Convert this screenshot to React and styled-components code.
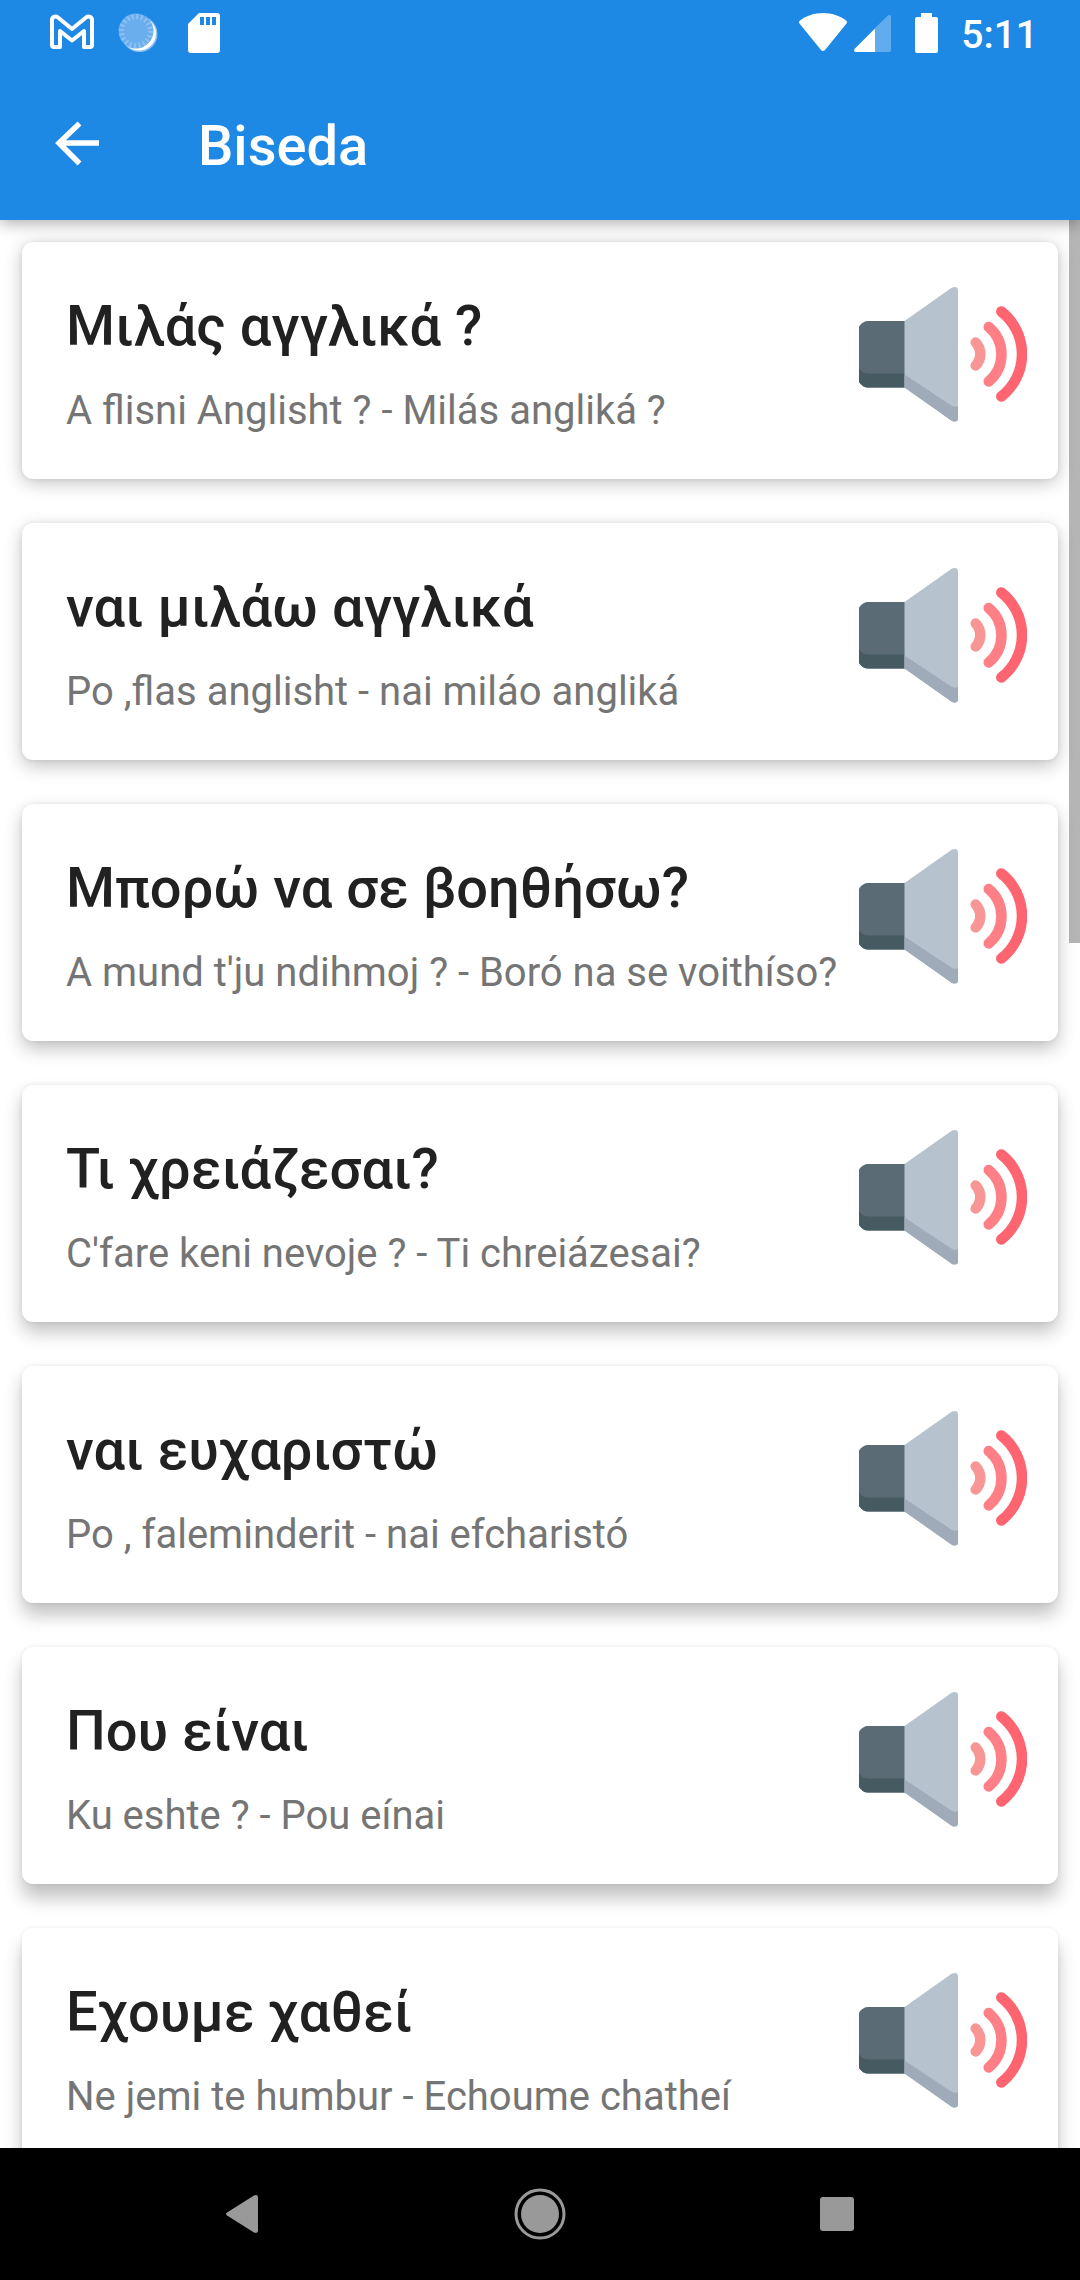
import React from "react";
import styled, { createGlobalStyle } from "styled-components";

const GlobalStyle = createGlobalStyle`
  *, *::before, *::after {
    box-sizing: border-box;
  }

  body {
    margin: 0;
    background-color: #fff;
    font-family: Roboto, "Noto Sans", sans-serif;
  }
`;

const Screen = styled.div`
  overflow: hidden;

  display: flex;
  flex-direction: column;

  width: 100%;
  height: 100vh;
`;

const Header = styled.header`
  position: relative;
  z-index: 2;

  flex: none;
  background-color: #1e88e5;
  color: #fff;

  box-shadow: 0 4px 14px rgba(0, 0, 0, 0.3);
`;

const StatusBar = styled.div`
  display: flex;
  justify-content: space-between;

  height: 66px;
  padding: 0 42px 0 50px;
`;

const StatusGroup = styled.div`
  display: flex;
  align-items: center;
  gap: ${({ $gap }) => $gap}px;
`;

const StatusIcon = styled.svg`
  display: block;
  flex: none;
  width: ${({ $width }) => $width || 44}px;
  height: 66px;
`;

const Time = styled.time`
  padding: 4px 0 0 14px;

  font-size: 39px;
  font-weight: 500;
  line-height: 46px;
`;

const Toolbar = styled.div`
  display: flex;
  align-items: center;
  gap: 88px;

  height: 154px;
  padding: 0 44px;
`;

const IconButton = styled.button`
  cursor: pointer;

  flex: none;
  padding: 0;
  background: none;
  border: none;

  & svg {
    display: block;
  }
`;

const PageTitle = styled.h1`
  margin: 0;
  padding-top: 6px;

  font-size: 56px;
  font-weight: 500;
  line-height: 64px;
`;

const Content = styled.main`
  position: relative;
  overflow: hidden;

  flex: 1;
  min-height: 0;
`;

const List = styled.ul`
  overflow-y: auto;
  scrollbar-width: none;

  display: flex;
  flex-direction: column;
  gap: 44px;

  height: 100%;
  margin: 0;
  padding: 22px;
  list-style: none;
`;

const Card = styled.li`
  display: flex;
  align-items: flex-start;
  flex: none;

  padding-right: 31px;
  background-color: #fff;

  border-radius: 11px;
  box-shadow:
    0 0 4px rgba(0, 0, 0, 0.08),
    0 ${({ $drop }) => $drop}px 18px rgba(0, 0, 0, 0.24);
`;

const Phrase = styled.div`
  flex: 1;
  display: flex;
  flex-direction: column;
  gap: 30px;

  min-width: 0;
  padding: 52px 0 45px 44px;
  white-space: nowrap;
`;

const Greek = styled.h2`
  margin: 0;

  font-size: 56px;
  font-weight: 500;
  line-height: 64px;
  color: #212121;
`;

const Translation = styled.p`
  margin: 0;

  font-size: 40px;
  line-height: 46px;
  color: #757575;
`;

const SpeakButton = styled(IconButton)`
  margin-top: 28px;
`;

const ScrollThumb = styled.div`
  position: absolute;
  top: 0;
  right: 0;

  width: 11px;
  height: calc(100% * 3 / 8);
  background-color: rgba(0, 0, 0, 0.29);
`;

const NavBar = styled.nav`
  flex: none;
  display: flex;
  justify-content: center;
  align-items: center;

  height: 132px;
  background-color: #000;
`;

const NavButton = styled(IconButton)`
  display: flex;
  justify-content: center;
  width: 297px;
`;

const phrases = [
  { greek: "Μιλάς αγγλικά ?", text: "A flisni Anglisht ? - Milás angliká ?" },
  { greek: "ναι μιλάω αγγλικά", text: "Po ,flas anglisht - nai miláo angliká" },
  {
    greek: "Μπορώ να σε βοηθήσω?",
    text: "A mund t'ju ndihmoj ? - Boró na se voithíso?",
  },
  { greek: "Τι χρειάζεσαι?", text: "C'fare keni nevoje ? - Ti chreiázesai?" },
  { greek: "ναι ευχαριστώ", text: "Po , faleminderit - nai efcharistó" },
  { greek: "Που είναι", text: "Ku eshte ? - Pou eínai" },
  { greek: "Εχουμε χαθεί", text: "Ne jemi te humbur - Echoume chatheí" },
];

function GmailIcon() {
  return (
    <StatusIcon viewBox="0 0 44 66" aria-hidden="true">
      <path
        d="M2 20v25q0 2 2 2h6V31l12 9.500L34 31v16h6q2 0 2-2V20c0-3-3.500-4.500-6-2.500L22 29 8 17.500C5.500 15.500 2 17 2 20z"
        fill="none"
        stroke="#fff"
        strokeWidth="4"
        strokeLinejoin="round"
      />
    </StatusIcon>
  );
}

function SyncIcon() {
  return (
    <StatusIcon viewBox="0 0 44 66" aria-hidden="true">
      <circle cx="23.500" cy="34" r="18" fill="#8fc3f2" />
      <circle cx="23" cy="33.500" r="17" fill="#fff" />
      <circle cx="20" cy="31" r="17.500" fill="#6aaeed" />
      <circle
        cx="20"
        cy="31"
        r="14.500"
        fill="none"
        stroke="#8fc3f2"
        strokeWidth="5"
        strokeDasharray="1.800 2.750"
      />
    </StatusIcon>
  );
}

function SdCardIcon() {
  return (
    <StatusIcon viewBox="0 0 44 66" aria-hidden="true">
      <path
        d="M17 13h18q3 0 3 3v34q0 3-3 3H9q-3 0-3-3V24z"
        fill="#fff"
      />
      <path d="M18 17h4v8h-4zM24 17h4v8h-4zM30 17h4v8h-4z" fill="#1e88e5" />
    </StatusIcon>
  );
}

function WifiIcon() {
  return (
    <StatusIcon $width={48} viewBox="0 0 48 66" aria-hidden="true">
      <path
        d="M24 13c-8.500 0-16.500 2.700-23 7.500-1.200 1-1.200 2-.5 3L22 50q2 2 4 0l21.500-26.500c.7-1 .7-2-.5-3C40.500 15.700 32.500 13 24 13z"
        fill="#fff"
      />
    </StatusIcon>
  );
}

function SignalIcon() {
  return (
    <StatusIcon viewBox="0 0 44 66" aria-hidden="true">
      <path
        d="M24 28 37 15.500q3-1.500 3 1.500v33q0 2-2 2H24z"
        fill="#fff"
        fillOpacity="0.3"
      />
      <path d="M24 28.500V52H5q-3-.5-1.500-3z" fill="#fff" />
    </StatusIcon>
  );
}

function BatteryIcon() {
  return (
    <StatusIcon viewBox="0 0 44 66" aria-hidden="true">
      <path
        d="M22 13h11v4h4q2 0 2 2v32q0 2-2 2H18q-2 0-2-2V19q0-2 2-2h4z"
        fill="#fff"
      />
    </StatusIcon>
  );
}

function BackArrowIcon() {
  return (
    <svg width="66" height="66" viewBox="0 0 66 66" aria-hidden="true">
      <path
        d="M35.500 13.500 15 33l20.500 20.500M14.500 33H55"
        fill="none"
        stroke="#fff"
        strokeWidth="5.500"
      />
    </svg>
  );
}

function SpeakerIcon() {
  return (
    <svg width="168" height="168" viewBox="0 0 168 168" aria-hidden="true">
      <path d="M0 56.500Q4 51 9 51h37v66.500H9q-5 0-9-5.500z" fill="#5a6b75" />
      <path d="M0 98q3 5.500 9 5.500h37v14H9q-5 0-9-5.500z" fill="#465a61" />
      <path
        d="M45.500 51 93 17.500q6-2 6 3V148q0 5-6 3L45.500 117.500z"
        fill="#b6c3ce"
      />
      <path
        d="M45.500 104.500 93 136q3 1.500 6 0v12q0 5-6 3L45.500 117.500z"
        fill="#9fabb9"
      />
      <g fill="none" strokeLinecap="round" strokeWidth="10.500">
        <path d="M116.700 72.500a16.700 16.700 0 0 1 0 23" stroke="#f89696" />
        <path d="M129.700 57a35.500 35.500 0 0 1 0 54.500" stroke="#ff7f87" />
        <path d="M142.300 41.500a54 54 0 0 1 0 85" stroke="#ff6471" />
      </g>
    </svg>
  );
}

function PhraseCard({ phrase, index }) {
  return (
    <Card $drop={4 + index * 2}>
      <Phrase>
        <Greek lang="el">{phrase.greek}</Greek>
        <Translation>{phrase.text}</Translation>
      </Phrase>
      <SpeakButton type="button" aria-label={phrase.greek}>
        <SpeakerIcon />
      </SpeakButton>
    </Card>
  );
}

export default function App() {
  return (
    <>
      <GlobalStyle />
      <Screen>
        <Header>
          <StatusBar>
            <StatusGroup $gap={22}>
              <GmailIcon />
              <SyncIcon />
              <SdCardIcon />
            </StatusGroup>
            <StatusGroup $gap={4}>
              <WifiIcon />
              <SignalIcon />
              <BatteryIcon />
              <Time>5:11</Time>
            </StatusGroup>
          </StatusBar>
          <Toolbar>
            <IconButton type="button" aria-label="Back">
              <BackArrowIcon />
            </IconButton>
            <PageTitle>Biseda</PageTitle>
          </Toolbar>
        </Header>
        <Content>
          <List>
            {phrases.map((phrase, index) => (
              <PhraseCard key={phrase.greek} phrase={phrase} index={index} />
            ))}
          </List>
          <ScrollThumb />
        </Content>
        <NavBar>
          <NavButton type="button" aria-label="Back">
            <svg width="50" height="50" viewBox="0 0 50 50" aria-hidden="true">
              <path
                d="M9 23.500 36 6.500q4-1.500 4 2v33q0 3.500-4 2L9 26.500q-2-1.500 0-3z"
                fill="#999"
              />
            </svg>
          </NavButton>
          <NavButton type="button" aria-label="Home">
            <svg width="52" height="52" viewBox="0 0 52 52" aria-hidden="true">
              <circle cx="26" cy="26" r="19" fill="#999" />
              <circle
                cx="26"
                cy="26"
                r="24"
                fill="none"
                stroke="#999"
                strokeWidth="3"
              />
            </svg>
          </NavButton>
          <NavButton type="button" aria-label="Recent apps">
            <svg width="50" height="50" viewBox="0 0 50 50" aria-hidden="true">
              <rect x="8" y="8" width="34" height="34" rx="3" fill="#999" />
            </svg>
          </NavButton>
        </NavBar>
      </Screen>
    </>
  );
}
